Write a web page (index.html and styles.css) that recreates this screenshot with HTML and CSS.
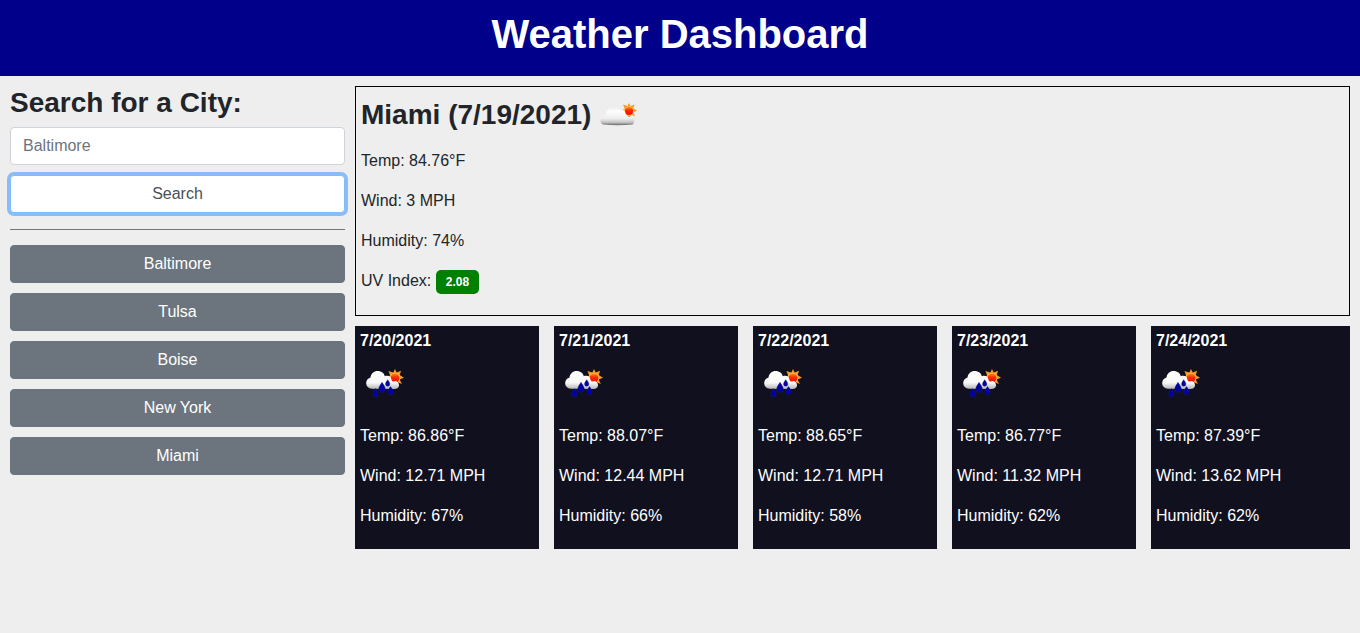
FILE: index.html
```html
<!DOCTYPE html>
<html lang="en">
<head>
<meta charset="utf-8">
<meta name="viewport" content="width=device-width, initial-scale=1">
<title>Weather Dashboard</title>
<link rel="stylesheet" href="styles.css">
</head>
<body>
<svg class="defs" width="0" height="0" aria-hidden="true">
  <defs>
    <linearGradient id="cloud" x1="0" y1="0" x2="0" y2="1">
      <stop offset="0" stop-color="#ececec"/><stop offset=".3" stop-color="#fdfdfd"/><stop offset=".65" stop-color="#ededed"/><stop offset=".85" stop-color="#c4c4c4"/><stop offset="1" stop-color="#686868"/>
    </linearGradient>
    <linearGradient id="raincloud" x1="0" y1="0" x2="0" y2="1">
      <stop offset="0" stop-color="#fff"/><stop offset=".65" stop-color="#f8f8f8"/><stop offset="1" stop-color="#b4b4b4"/>
    </linearGradient>
    <linearGradient id="sunfill" x1="0" y1="0" x2="0" y2="1">
      <stop offset="0" stop-color="#ff8a18"/><stop offset=".45" stop-color="#fa2808"/><stop offset="1" stop-color="#f01000"/>
    </linearGradient>
    <symbol id="sun" viewBox="0 0 20 20">
      <path fill="#f59b20" d="M10 1l1.7 3.4 4.4-1.7-1.4 4.2 4.3 2.9-4.3 1.7 2.2 4.4-4.4-1.6L10 18l-2.3-3.6-4.5 1.5 2-4.2L1 9.8l4.2-2.3-1.8-4.6 4.9 1.5z"/>
      <circle cx="10" cy="10" r="5.3" fill="#ffc45a"/>
      <circle cx="10" cy="10" r="4.5" fill="url(#sunfill)"/>
    </symbol>
    <symbol id="few-clouds" viewBox="0 0 50 50">
      <use href="#sun" x="26" y="10" width="18" height="18"/>
      <path fill="url(#cloud)" d="M9 32.500C5.500 31 5.600 26.500 9 24.800C11 24 12 23.500 12.300 21.500C13.200 17 16 14 20 14C23.500 14 25.500 16 26.500 18C29.500 17 31 19 31.500 21.500C32 24.500 35 25.500 38 24.500C41 26 41 30.500 38.500 32.500Q24 34 9 32.500Z"/>
    </symbol>
    <symbol id="rain" viewBox="0 0 50 50">
      <use href="#sun" x="25" y="10" width="20" height="20"/>
      <path fill="url(#raincloud)" d="M12 30.800C4.500 30.500 4.500 21 10.500 19.500C11 15.500 14 13 17.500 13C21.500 13 24.300 15.500 24.800 18.200C28.500 16.800 31.500 19 31.500 22C32.500 24 34 23.600 36 23C40.500 25 40 31 34.500 31Z"/>
      <g fill="#0000a5" stroke="#22226c" stroke-width=".4">
        <path d="M15.500 30.500q3 4.200 2.700 5.700a2.700 2.700 0 0 1-5.400 0q-.3-1.500 2.700-5.700z"/>
        <path d="M22 24.300q3.600 5.200 3.300 6.900a3.300 3.300 0 0 1-6.600 0q-.3-1.700 3.300-6.900z"/>
        <path d="M27.700 21.700q2.400 3 2.200 4.300a2.200 2.200 0 0 1-4.400 0q-.2-1.300 2.200-4.300z"/>
        <path d="M30.500 28.500q3 4 2.700 5.600a2.700 2.700 0 0 1-5.400 0q-.3-1.600 2.700-5.600z"/>
      </g>
    </symbol>
  </defs>
</svg>
<header class="header"><h1>Weather Dashboard</h1></header>
<div class="layout">
  <aside class="sidebar">
    <form class="search">
      <label class="title" for="city">Search for a City:</label>
      <input id="city" class="field" type="text" placeholder="Baltimore">
      <button class="btn btn-search" type="button">Search</button>
    </form>
    <hr class="rule">
    <div class="history">
      <button class="btn" type="button">Baltimore</button>
      <button class="btn" type="button">Tulsa</button>
      <button class="btn" type="button">Boise</button>
      <button class="btn" type="button">New York</button>
      <button class="btn" type="button">Miami</button>
    </div>
  </aside>
  <main class="main">
    <section class="current">
      <h2 class="title">Miami (7/19/2021)<svg class="icon" role="img" aria-label="Few clouds"><use href="#few-clouds"/></svg></h2>
      <p>Temp: 84.76°F</p>
      <p>Wind: 3 MPH</p>
      <p>Humidity: 74%</p>
      <p>UV Index: <span class="badge">2.08</span></p>
    </section>
    <section class="forecast">
      <article class="day"><h3>7/20/2021</h3><svg class="icon" role="img" aria-label="Rain"><use href="#rain"/></svg><p>Temp: 86.86°F</p><p>Wind: 12.71 MPH</p><p>Humidity: 67%</p></article>
      <article class="day"><h3>7/21/2021</h3><svg class="icon" role="img" aria-label="Rain"><use href="#rain"/></svg><p>Temp: 88.07°F</p><p>Wind: 12.44 MPH</p><p>Humidity: 66%</p></article>
      <article class="day"><h3>7/22/2021</h3><svg class="icon" role="img" aria-label="Rain"><use href="#rain"/></svg><p>Temp: 88.65°F</p><p>Wind: 12.71 MPH</p><p>Humidity: 58%</p></article>
      <article class="day"><h3>7/23/2021</h3><svg class="icon" role="img" aria-label="Rain"><use href="#rain"/></svg><p>Temp: 86.77°F</p><p>Wind: 11.32 MPH</p><p>Humidity: 62%</p></article>
      <article class="day"><h3>7/24/2021</h3><svg class="icon" role="img" aria-label="Rain"><use href="#rain"/></svg><p>Temp: 87.39°F</p><p>Wind: 13.62 MPH</p><p>Humidity: 62%</p></article>
    </section>
  </main>
</div>
</body>
</html>
```
FILE: styles.css
```css
*, *::before, *::after { box-sizing: border-box; }

body {
  margin: 0;
  background: #eee;
  color: #212529;
  font: 16px/24px "Liberation Sans", Arial, sans-serif;
}

h1, h2, h3 { margin: 0 0 8px; font-weight: 700; }
p { margin: 0 0 16px; }

.defs { position: absolute; }

.header {
  padding: 10px;
  background: #00008b;
  color: #fff;
  text-align: center;
}
.header h1 { font-size: 40px; line-height: 48px; }

.layout { display: flex; padding: 10px; }
.sidebar { flex: 0 0 25%; }
.main { flex: 1; min-width: 0; padding-left: 10px; }

.title { font-size: 28px; font-weight: 700; line-height: 33px; }
.search { display: flex; flex-direction: column; }
.search .title { margin-bottom: 8px; }

.field {
  width: 100%;
  height: 38px;
  margin-bottom: 10px;
  padding: 6px 12px;
  border: 1px solid #ced4da;
  border-radius: 4px;
  background: #fff;
  color: #495057;
  font: inherit;
}
.field::placeholder { color: #6c757d; opacity: 1; }

.btn {
  width: 100%;
  padding: 6px 12px;
  border: 1px solid #6c757d;
  border-radius: 4px;
  background: #6c757d;
  color: #fff;
  font: inherit;
  cursor: pointer;
}
.btn-search {
  border-color: #80bdff;
  background: #fff;
  color: #495057;
  box-shadow: 0 0 0 3px #89bdf8;
}

.rule { margin: 16px 0 15px; border: 0; border-top: 1px solid #777; }
.history { display: grid; gap: 10px; }

.current {
  margin-bottom: 10px;
  padding: 5px;
  border: 1px solid #000;
}
.current .title { margin-bottom: 7px; }
.icon { width: 50px; height: 50px; vertical-align: middle; }
.current .icon { margin-left: 3px; }
.current p:last-child { margin-bottom: 16px; }

.badge {
  display: inline-block;
  padding: 6px 10px;
  border-radius: 5px;
  background: #008000;
  color: #fff;
  font-size: 12px;
  font-weight: 700;
  line-height: 12px;
  vertical-align: baseline;
}

.forecast { display: grid; grid-template-columns: repeat(5, 1fr); }
.day { margin-right: 15px; padding: 5px; background: #11101f; color: #fff; }
.day:last-child { margin-right: 0; }
.day h3 { font-size: 16px; line-height: 19px; }
.day .icon { display: block; margin-bottom: 16px; }
```
